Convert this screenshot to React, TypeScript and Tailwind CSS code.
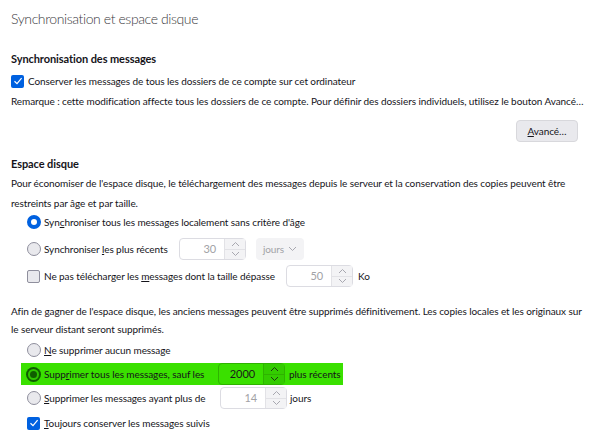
import React from 'react';

function Check({ checked }: { checked?: boolean }) {
  if (checked) {
    return (
      <span className="w-[13px] h-[13px] rounded-[2px] bg-[#0061e0] flex items-center justify-center shrink-0">
        <svg width="10" height="10" viewBox="0 0 10 10">
          <path d="M1.5 5.2 L4 7.6 L8.6 2.2" fill="none" stroke="white" strokeWidth="1.2" />
        </svg>
      </span>
    );
  }
  return <span className="w-[13px] h-[13px] rounded-[2px] bg-[#e9e9ed] border border-[#8f8f9d] shrink-0" />;
}

function Radio({ selected, green }: { selected?: boolean; green?: boolean }) {
  if (green) {
    return (
      <span className="w-[15px] h-[15px] rounded-full bg-[#0f5c00] flex items-center justify-center shrink-0">
        <span className="w-[11px] h-[11px] rounded-full bg-[#2fc400] flex items-center justify-center">
          <span className="w-[7px] h-[7px] rounded-full bg-[#0f5c00]" />
        </span>
      </span>
    );
  }
  if (selected) {
    return <span className="w-[14px] h-[14px] rounded-full border-[4px] border-[#0061e0] bg-white shrink-0" />;
  }
  return <span className="w-[14px] h-[14px] rounded-full bg-[#e9e9ed] border border-[#8f8f9d] shrink-0" />;
}

function Chevron({ up, color }: { up?: boolean; color: string }) {
  return (
    <svg width="9" height="6" viewBox="0 0 9 6">
      <path d={up ? 'M1 5 L4.5 1.5 L8 5' : 'M1 1 L4.5 4.5 L8 1'} fill="none" stroke={color} strokeWidth="1" />
    </svg>
  );
}

function Spin({ value, green }: { value: string; green?: boolean }) {
  if (green) {
    return (
      <div className="w-[67px] h-[22px] rounded-[4px] border border-[#2eb300] flex shrink-0">
        <span className="flex-1 flex items-center justify-end pr-[8px] text-[11px] text-[#1a1a1a]">{value}</span>
        <div className="w-[21px] flex flex-col border-l border-[#2eb300] bg-[#33cc00]">
          <span className="flex-1 flex items-center justify-center border-b border-[#2eb300]">
            <Chevron up color="#1a3a10" />
          </span>
          <span className="flex-1 flex items-center justify-center">
            <Chevron color="#1a3a10" />
          </span>
        </div>
      </div>
    );
  }
  return (
    <div className="w-[67px] h-[22px] rounded-[4px] border border-[#dcdce2] bg-white flex shrink-0">
      <span className="flex-1 flex items-center justify-end pr-[8px] text-[11px] text-[#a2a2a6]">{value}</span>
      <div className="w-[21px] flex flex-col border-l border-[#e2e2e6] bg-[#f3f3f5]">
        <span className="flex-1 flex items-center justify-center border-b border-[#e2e2e6]">
          <Chevron up color="#a8a8b0" />
        </span>
        <span className="flex-1 flex items-center justify-center">
          <Chevron color="#a8a8b0" />
        </span>
      </div>
    </div>
  );
}

export default function App() {
  return (
    <div className="w-[589px] h-[445px] bg-white overflow-hidden pl-[11px] font-['Lato','Liberation_Sans',sans-serif] text-[10px] tracking-[-0.08px] text-[#15141a] whitespace-nowrap">
      <div className="h-[36px] flex items-center text-[14px] tracking-[-0.4px] text-[#3a3a3e] font-light">
        Synchronisation et espace disque
      </div>

      <div className="h-[20px] mt-[13px] flex items-center text-[11px] font-bold">Synchronisation des messages</div>
      <div className="h-[20px] mt-[2px] flex items-center gap-[4px]">
        <Check checked />
        <span>Conserver les messages de tous les dossiers de ce compte sur cet ordinateur</span>
      </div>
      <div className="h-[20px] flex items-center">
        Remarque : cette modification affecte tous les dossiers de ce compte. Pour définir des dossiers individuels, utilisez le bouton Avancé…
      </div>
      <div className="mt-[9px] flex justify-end pr-[11px]">
        <button className="w-[62px] h-[22px] rounded-[4px] bg-[#e9e9ed] border border-[#d8d8dc] text-[10px] text-[#15141a]">
          <u>A</u>vancé…
        </button>
      </div>

      <div className="h-[18px] mt-[13px] flex items-center text-[11px] font-bold">Espace disque</div>
      <div className="h-[20px] flex items-center">
        Pour économiser de l'espace disque, le téléchargement des messages depuis le serveur et la conservation des copies peuvent être
      </div>
      <div className="h-[20px] flex items-center">restreints par âge et par taille.</div>

      <div className="pl-[16px]">
        <div className="h-[18px] flex items-center gap-[3px]">
          <Radio selected />
          <span>
            Syn<u>c</u>hroniser tous les messages localement sans critère d'âge
          </span>
        </div>
        <div className="h-[24px] mt-[6px] flex items-center">
          <div className="w-[152px] flex items-center gap-[3px]">
            <Radio />
            <span>
              Synchroniser <u>l</u>es plus récents
            </span>
          </div>
          <Spin value="30" />
          <div className="ml-[10px] w-[48px] h-[22px] rounded-[4px] bg-[#f3f3f5] flex items-center justify-center gap-[4px] text-[#a2a2a6]">
            jours
            <Chevron color="#a8a8b0" />
          </div>
        </div>
        <div className="h-[24px] mt-[3px] flex items-center">
          <div className="w-[259px] flex items-center gap-[4px]">
            <Check />
            <span>
              Ne pas télécharger les <u>m</u>essages dont la taille dépasse
            </span>
          </div>
          <Spin value="50" />
          <span className="ml-[5px]">Ko</span>
        </div>
      </div>

      <div className="mt-[14px]">
        <div className="h-[18px] flex items-center">
          Afin de gagner de l'espace disque, les anciens messages peuvent être supprimés définitivement. Les copies locales et les originaux sur
        </div>
        <div className="h-[18px] flex items-center">le serveur distant seront supprimés.</div>
      </div>

      <div className="pl-[16px]">
        <div className="h-[20px] mt-[2px] flex items-center gap-[3px]">
          <Radio />
          <span>
            <u>N</u>e supprimer aucun message
          </span>
        </div>
      </div>
      <div className="ml-[10px] mt-[3px] w-[322px] h-[22px] bg-[#3ae000] flex items-center pl-[5px]">
        <div className="w-[192px] flex items-center gap-[3px]">
          <Radio green />
          <span>
            Supp<u>r</u>imer tous les messages, sauf les
          </span>
        </div>
        <Spin value="2000" green />
        <span className="ml-[4px]">plus récents</span>
      </div>
      <div className="pl-[16px]">
        <div className="h-[24px] mt-[1px] flex items-center">
          <div className="w-[193px] flex items-center gap-[3px]">
            <Radio />
            <span>
              <u>S</u>upprimer les messages ayant plus de
            </span>
          </div>
          <Spin value="14" />
          <span className="ml-[3px]">jours</span>
        </div>
        <div className="h-[20px] mt-[3px] flex items-center gap-[4px]">
          <Check checked />
          <span>
            <u>T</u>oujours conserver les messages suivis
          </span>
        </div>
      </div>
    </div>
  );
}
